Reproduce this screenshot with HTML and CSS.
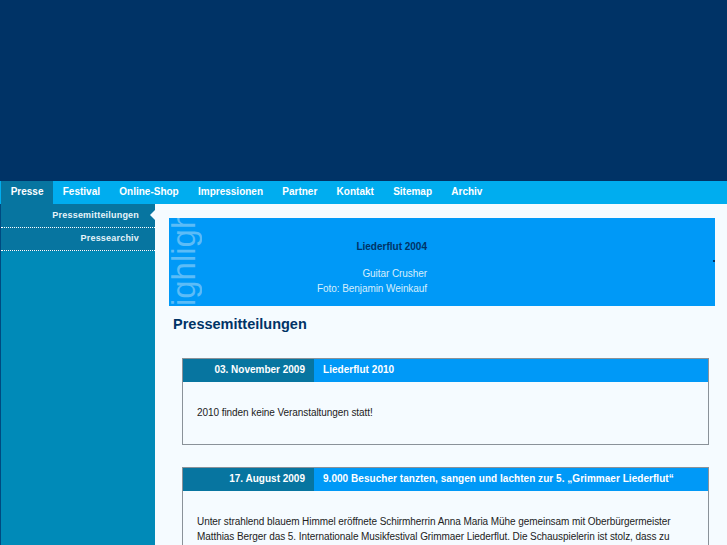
FILE: index.html
```html
<!DOCTYPE html>
<html>
<head>
    <title>Pressemitteilungen</title>
    <link rel="stylesheet" href="styles.css">
</head>
<body>

    <div class="header"></div>

    <ul class="nav">
        <li class="active"><a href="#">Presse</a></li>
        <li><a href="#">Festival</a></li>
        <li><a href="#">Online-Shop</a></li>
        <li><a href="#">Impressionen</a></li>
        <li><a href="#">Partner</a></li>
        <li><a href="#">Kontakt</a></li>
        <li><a href="#">Sitemap</a></li>
        <li><a href="#">Archiv</a></li>
    </ul>

    <div class="main">
        <ul class="sidebar">
            <li class="current"><a href="#">Pressemitteilungen</a></li>
            <li><a href="#">Pressearchiv</a></li>
        </ul>

        <div class="content">
            <div class="highlight">
                <span class="highlight-label">Highlights</span>
                <span class="highlight-dot"></span>
                <div class="highlight-text">
                    <p class="highlight-title">Liederflut 2004</p>
                    <p>Guitar Crusher<br>Foto: Benjamin Weinkauf</p>
                </div>
            </div>

            <h1>Pressemitteilungen</h1>

            <div class="card">
                <div class="card-head">
                    <div class="card-date">03. November 2009</div>
                    <div class="card-title">Liederflut 2010</div>
                </div>
                <div class="card-body">
                    <p>2010 finden keine Veranstaltungen statt!</p>
                </div>
            </div>

            <div class="card">
                <div class="card-head">
                    <div class="card-date">17. August 2009</div>
                    <div class="card-title">9.000 Besucher tanzten, sangen und lachten zur 5. „Grimmaer Liederflut“</div>
                </div>
                <div class="card-body">
                    <p>Unter strahlend blauem Himmel eröffnete Schirmherrin Anna Maria Mühe gemeinsam mit Oberbürgermeister Matthias Berger das 5. Internationale Musikfestival Grimmaer Liederflut. Die Schauspielerin ist stolz, dass zu</p>
                </div>
            </div>
        </div>
    </div>

</body>
</html>
```

FILE: styles.css
```css
html {
    height: 100%;
    overflow: hidden;
}

body {
    margin: 0;
    height: 100%;
    overflow: hidden;
    display: flex;
    flex-direction: column;
    font-family: "Liberation Sans", Arial, sans-serif;
    font-size: 10px;
    background-color: #f5fbff;
    color: #222;
}

a {
    color: #fff;
    text-decoration: none;
}

p {
    margin: 0;
}

.header {
    height: 181px;
    flex: none;
    background-color: #003366;
}

.nav {
    display: flex;
    flex: none;
    height: 23px;
    margin: 0;
    padding: 0 0 0 1px;
    list-style: none;
    background-color: #00adef;
    font-weight: bold;
    font-size: 10px;
    line-height: 21px;
}

.nav li {
    padding: 0 9.65px;
}

.nav li.active {
    background-color: #0775a0;
}

.main {
    display: flex;
    flex: 1;
    min-height: 0;
}

.sidebar {
    width: 154px;
    flex: none;
    margin: 0;
    padding: 0;
    list-style: none;
    background: #008ab8;
    border-left: 1px solid #004a80;
    font-size: 9px;
    font-weight: bold;
    letter-spacing: 0.2px;
    text-align: right;
}

.sidebar li {
    position: relative;
    height: 22px;
    padding-right: 16px;
    line-height: 21px;
    background-color: #0775a0;
    border-bottom: 1px dotted #fff;
}

.sidebar li.current {
    height: 23px;
    line-height: 22px;
}

.sidebar li a {
    color: #e6f4fa;
}

.sidebar li.current::after {
    content: "";
    position: absolute;
    right: 0;
    top: 6px;
    border: 5px solid transparent;
    border-right-color: #f5fbff;
    border-left-width: 0;
}

.content {
    flex: 1;
    min-width: 0;
    padding: 14px 12px 0 14px;
}

.highlight {
    position: relative;
    height: 88px;
    overflow: hidden;
    background-color: #0099f7;
}

.highlight-label {
    position: absolute;
    left: 0;
    bottom: -24px;
    writing-mode: vertical-rl;
    transform: rotate(180deg);
    font-size: 33px;
    line-height: 30px;
    white-space: nowrap;
    color: #5cbcf7;
}

.highlight-dot {
    position: absolute;
    right: 0;
    top: 42px;
    width: 2px;
    height: 2px;
    background-color: #003366;
}

.highlight-text {
    width: 258px;
    padding-top: 21px;
    text-align: right;
    line-height: 15px;
    letter-spacing: -0.07px;
    color: #d6eefc;
}

.highlight-title {
    margin-bottom: 12px;
    font-weight: bold;
    letter-spacing: 0;
    color: #003366;
}

h1 {
    margin: 10px 0 25px 4px;
    font-size: 14.5px;
    line-height: 17px;
    color: #003366;
}

.card {
    margin: 0 6px 22px 13px;
    border: 1px solid #8a9299;
}

.card-head {
    display: flex;
    height: 23px;
    line-height: 21px;
    font-weight: bold;
    color: #fff;
    background-color: #0099f7;
}

.card-date {
    width: 131px;
    flex: none;
    padding-right: 9px;
    text-align: right;
    background-color: #0775a0;
    box-sizing: border-box;
}

.card-title {
    padding-left: 9px;
    letter-spacing: 0.04px;
}

.card-body {
    padding: 23px 14px 24px;
    line-height: 15px;
    letter-spacing: -0.07px;
}
```
